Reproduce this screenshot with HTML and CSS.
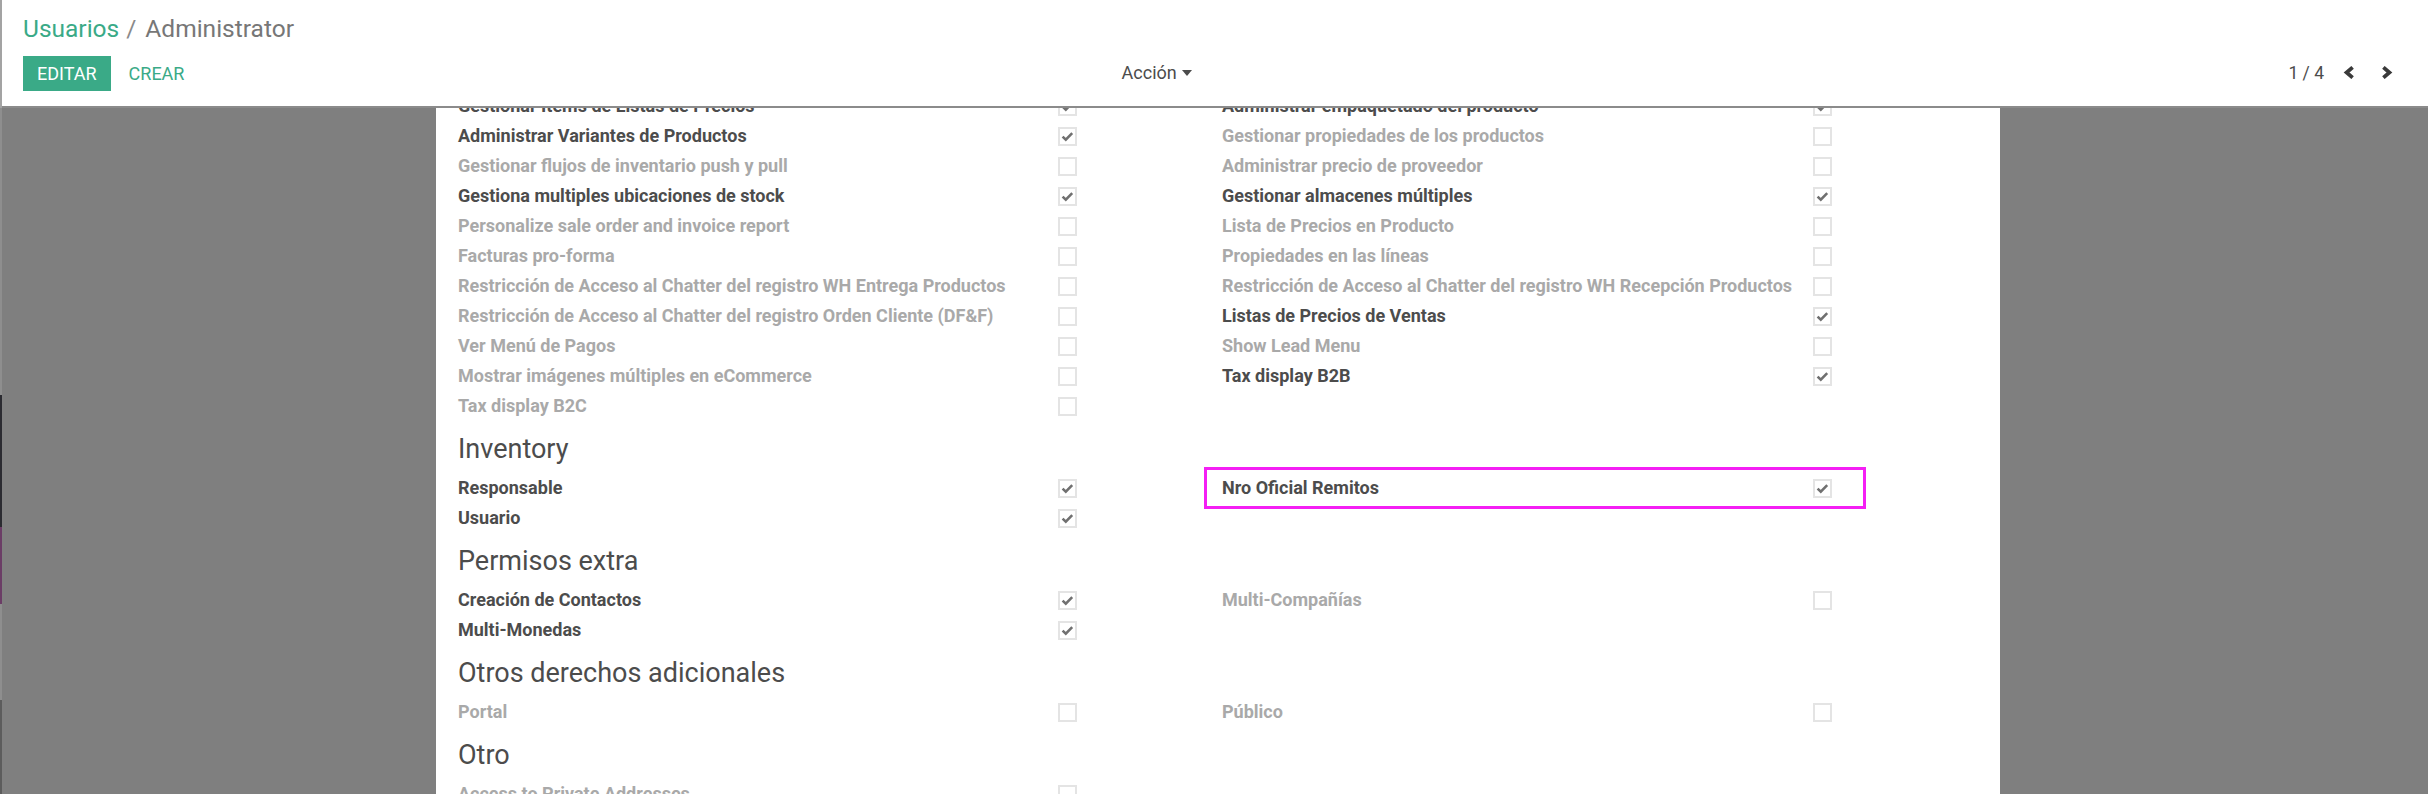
FILE: index.html
```html
<!DOCTYPE html>
<html lang="es">
<head>
<meta charset="utf-8">
<title>Usuarios / Administrator</title>
<link rel="stylesheet" href="styles.css">
</head>
<body>
<div class="screen">
  <div class="edge"></div>
  <div class="app">
    <header class="cp">
      <div class="crumbs">
        <a class="crumb-link">Usuarios</a><span class="crumb-sep">/</span><span class="crumb-active">Administrator</span>
      </div>
      <div class="cp-row">
        <div class="cp-left">
          <button class="btn btn-primary">EDITAR</button>
          <button class="btn btn-link">CREAR</button>
        </div>
        <div class="cp-sidebar">
          <span class="dropdown">Acción<span class="caret"></span></span>
        </div>
        <div class="pager">
          <span class="pager-value">1 / 4</span>
          <button class="pager-btn" aria-label="Anterior"><svg width="12" height="13" viewBox="0 0 12 13"><polyline points="9.6,1.4 3.6,6.5 9.6,11.6" fill="none" stroke="#3a3a3a" stroke-width="3.8"/></svg></button>
          <button class="pager-btn" aria-label="Siguiente"><svg width="12" height="13" viewBox="0 0 12 13"><polyline points="2.4,1.4 8.4,6.5 2.4,11.6" fill="none" stroke="#3a3a3a" stroke-width="3.8"/></svg></button>
        </div>
      </div>
    </header>

    <main class="main">
      <div class="sheet">
        <div class="group2">
          <div class="grp grp-left">
            <div class="field"><span class="lbl on">Gestionar Items de Listas de Precios</span><span class="cb"><svg viewBox="0 0 15 15"><polyline points="2.6,7.6 5.8,10.6 12.2,4.2"/></svg></span></div>
            <div class="field"><span class="lbl on">Administrar Variantes de Productos</span><span class="cb"><svg viewBox="0 0 15 15"><polyline points="2.6,7.6 5.8,10.6 12.2,4.2"/></svg></span></div>
            <div class="field"><span class="lbl off">Gestionar flujos de inventario push y pull</span><span class="cb"></span></div>
            <div class="field"><span class="lbl on">Gestiona multiples ubicaciones de stock</span><span class="cb"><svg viewBox="0 0 15 15"><polyline points="2.6,7.6 5.8,10.6 12.2,4.2"/></svg></span></div>
            <div class="field"><span class="lbl off">Personalize sale order and invoice report</span><span class="cb"></span></div>
            <div class="field"><span class="lbl off">Facturas pro-forma</span><span class="cb"></span></div>
            <div class="field"><span class="lbl off">Restricción de Acceso al Chatter del registro WH Entrega Productos</span><span class="cb"></span></div>
            <div class="field"><span class="lbl off">Restricción de Acceso al Chatter del registro Orden Cliente (DF&amp;F)</span><span class="cb"></span></div>
            <div class="field"><span class="lbl off">Ver Menú de Pagos</span><span class="cb"></span></div>
            <div class="field"><span class="lbl off">Mostrar imágenes múltiples en eCommerce</span><span class="cb"></span></div>
            <div class="field"><span class="lbl off">Tax display B2C</span><span class="cb"></span></div>
          </div>
          <div class="grp grp-right">
            <div class="field"><span class="lbl on">Administrar empaquetado del producto</span><span class="cb"><svg viewBox="0 0 15 15"><polyline points="2.6,7.6 5.8,10.6 12.2,4.2"/></svg></span></div>
            <div class="field"><span class="lbl off">Gestionar propiedades de los productos</span><span class="cb"></span></div>
            <div class="field"><span class="lbl off">Administrar precio de proveedor</span><span class="cb"></span></div>
            <div class="field"><span class="lbl on">Gestionar almacenes múltiples</span><span class="cb"><svg viewBox="0 0 15 15"><polyline points="2.6,7.6 5.8,10.6 12.2,4.2"/></svg></span></div>
            <div class="field"><span class="lbl off">Lista de Precios en Producto</span><span class="cb"></span></div>
            <div class="field"><span class="lbl off">Propiedades en las líneas</span><span class="cb"></span></div>
            <div class="field"><span class="lbl off">Restricción de Acceso al Chatter del registro WH Recepción Productos</span><span class="cb"></span></div>
            <div class="field"><span class="lbl on">Listas de Precios de Ventas</span><span class="cb"><svg viewBox="0 0 15 15"><polyline points="2.6,7.6 5.8,10.6 12.2,4.2"/></svg></span></div>
            <div class="field"><span class="lbl off">Show Lead Menu</span><span class="cb"></span></div>
            <div class="field"><span class="lbl on">Tax display B2B</span><span class="cb"><svg viewBox="0 0 15 15"><polyline points="2.6,7.6 5.8,10.6 12.2,4.2"/></svg></span></div>
          </div>
        </div>

        <h2 class="sep-title">Inventory</h2>
        <div class="group2">
          <div class="grp grp-left">
            <div class="field"><span class="lbl on">Responsable</span><span class="cb"><svg viewBox="0 0 15 15"><polyline points="2.6,7.6 5.8,10.6 12.2,4.2"/></svg></span></div>
            <div class="field"><span class="lbl on">Usuario</span><span class="cb"><svg viewBox="0 0 15 15"><polyline points="2.6,7.6 5.8,10.6 12.2,4.2"/></svg></span></div>
          </div>
          <div class="grp grp-right">
            <div class="field highlighted"><span class="lbl on">Nro Oficial Remitos</span><span class="cb"><svg viewBox="0 0 15 15"><polyline points="2.6,7.6 5.8,10.6 12.2,4.2"/></svg></span><span class="highlight-box"></span></div>
          </div>
        </div>

        <h2 class="sep-title">Permisos extra</h2>
        <div class="group2">
          <div class="grp grp-left">
            <div class="field"><span class="lbl on">Creación de Contactos</span><span class="cb"><svg viewBox="0 0 15 15"><polyline points="2.6,7.6 5.8,10.6 12.2,4.2"/></svg></span></div>
            <div class="field"><span class="lbl on">Multi-Monedas</span><span class="cb"><svg viewBox="0 0 15 15"><polyline points="2.6,7.6 5.8,10.6 12.2,4.2"/></svg></span></div>
          </div>
          <div class="grp grp-right">
            <div class="field"><span class="lbl off">Multi-Compañías</span><span class="cb"></span></div>
          </div>
        </div>

        <h2 class="sep-title">Otros derechos adicionales</h2>
        <div class="group2">
          <div class="grp grp-left">
            <div class="field"><span class="lbl off">Portal</span><span class="cb"></span></div>
          </div>
          <div class="grp grp-right">
            <div class="field"><span class="lbl off">Público</span><span class="cb"></span></div>
          </div>
        </div>

        <h2 class="sep-title">Otro</h2>
        <div class="group2">
          <div class="grp grp-left">
            <div class="field"><span class="lbl off">Access to Private Addresses</span><span class="cb"></span></div>
          </div>
          <div class="grp grp-right"></div>
        </div>
      </div>
    </main>
  </div>
</div>
</body>
</html>
```

FILE: styles.css
```css
* { box-sizing: border-box; }

html, body {
  margin: 0;
  padding: 0;
  height: 794px;
  overflow: hidden;
}

body {
  font-family: Roboto, "Noto Sans", "Liberation Sans", sans-serif;
  color: #4c4c4c;
  background: #7f7f7f;
}

.screen {
  display: flex;
  height: 794px;
}

.edge {
  flex: 0 0 2px;
  background: linear-gradient(to bottom,
    #a3a3a3 0, #a3a3a3 108px,
    #8e8e8e 108px, #8e8e8e 395px,
    #2b2b31 395px, #2b2b31 527px,
    #6b3d66 527px, #6b3d66 604px,
    #8e8e8e 604px, #8e8e8e 700px,
    #5c5c5c 700px, #5c5c5c 794px);
}

.app {
  flex: 1 1 auto;
  min-width: 0;
  display: flex;
  flex-direction: column;
}

/* ---------- control panel ---------- */
.cp {
  position: relative;
  z-index: 2;
  background: #fff;
  border-bottom: 2px solid #8b8b8b;
  padding: 15px 22px 15px 21px;
}

.crumbs {
  font-size: 24.5px;
  line-height: 28px;
  height: 27px;
  white-space: nowrap;
}

.crumb-link { color: #3aaa87; }
.crumb-sep { color: #8a8a8a; margin: 0 9px 0 7px; }
.crumb-active { color: #777; }

.cp-row {
  display: flex;
  align-items: center;
  margin-top: 14px;
  height: 35px;
}

.cp-left {
  flex: 0 0 46.1%;
  display: flex;
  align-items: center;
  gap: 4px;
}

.btn {
  font-family: inherit;
  font-size: 18px;
  height: 35px;
  border: 0;
  border-radius: 0;
  padding: 0 14px;
  line-height: 35px;
  cursor: pointer;
}

.btn-primary {
  background: #3aaa87;
  color: #fff;
}

.btn-link {
  background: transparent;
  color: #3aaa87;
}

.cp-sidebar {
  display: flex;
  align-items: center;
  margin-top: -3px;
}

.dropdown {
  font-size: 18px;
  color: #4c4c4c;
  display: inline-flex;
  align-items: center;
}

.caret {
  display: inline-block;
  width: 0;
  height: 0;
  margin-left: 5px;
  margin-top: 1px;
  border-left: 5px solid transparent;
  border-right: 5px solid transparent;
  border-top: 6px solid #4c4c4c;
}

.pager {
  margin-left: auto;
  display: flex;
  align-items: center;
  margin-top: -2px;
}

.pager-value {
  font-size: 17.5px;
  color: #4c4c4c;
  margin-right: 6px;
}

.pager-btn {
  width: 38px;
  height: 35px;
  padding: 0;
  border: 0;
  background: transparent;
  display: flex;
  align-items: center;
  justify-content: center;
}

.pager-btn svg { display: block; }

/* ---------- form view ---------- */
.main {
  flex: 1 1 auto;
  margin-top: -17px;
  padding: 0 428px 0 434px;
  overflow: hidden;
}

.sheet {
  background: #fff;
  min-height: 100%;
  padding: 0 22px;
}

.group2 {
  display: grid;
  grid-template-columns: 764px 1fr;
}

.field {
  display: grid;
  align-items: center;
  height: 30px;
  position: relative;
}

.grp-left .field { grid-template-columns: 600px 19px; }
.grp-right .field { grid-template-columns: 591px 19px; }

.lbl {
  font-size: 18px;
  font-weight: 700;
  line-height: 30px;
  white-space: nowrap;
}

.lbl.on { color: #4c4c4c; }
.lbl.off { color: #a9a9a9; }

.cb {
  width: 19px;
  height: 19px;
  border: 2px solid #e4e4e4;
  background: #fff;
  display: flex;
  align-items: center;
  justify-content: center;
}

.cb svg {
  width: 15px;
  height: 15px;
  display: block;
  fill: none;
  stroke: #707070;
  stroke-width: 2.6;
}

.sep-title {
  font-size: 27px;
  font-weight: 400;
  color: #4c4c4c;
  line-height: 36px;
  margin: 10px 0 6px;
}

.highlight-box {
  position: absolute;
  left: -18px;
  top: -6px;
  width: 662px;
  height: 42px;
  border: 3px solid #f41ff4;
  pointer-events: none;
}
```
